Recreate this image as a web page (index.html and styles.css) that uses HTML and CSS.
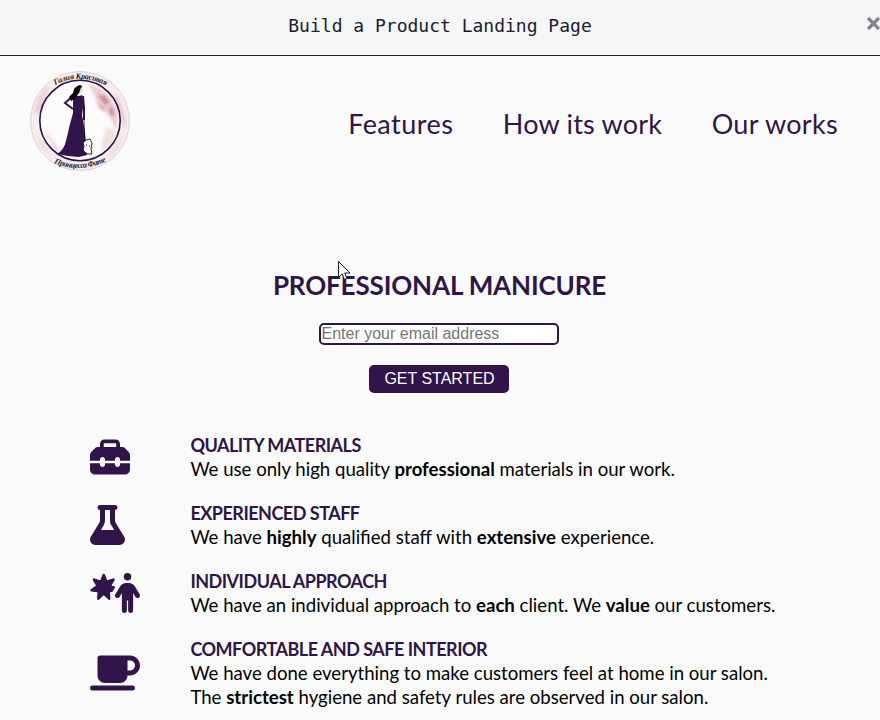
FILE: index.html
```html
<!DOCTYPE html>
<html lang="en">
<head>
<meta charset="utf-8">
<title>Build a Product Landing Page</title>
<link rel="stylesheet" href="styles.css">
</head>
<body>
<div class="topbar"><span class="topbar-title">Build a Product Landing Page</span>
<svg class="close" viewBox="0 0 15 15"><path d="M2 2L13 13M13 2L2 13"/></svg></div>
<header class="header">
<svg class="logo" viewBox="0 0 100 100">
<defs>
<filter id="soft"><feGaussianBlur stdDeviation="1.5"/></filter>
<path id="topArc" d="M25 14Q50 1 77 15"/>
<path id="bottomArc" d="M24 92Q50 103 77 90"/>
</defs>
<circle cx="50" cy="50" r="49.500" fill="#f6ecef" stroke="#ddd3d6"/>
<g filter="url(#soft)">
<path d="M4 42Q8 22 19 14L14 31 8 43ZM84 19Q97 38 96 60L90 49Z" fill="#ebcfd7"/>
<path d="M5 62Q9 78 20 86L15 72Z" fill="#eee1d8"/>
<path d="M94 62Q90 80 77 90L84 75Z" fill="#f0dfd9"/>
</g>
<circle cx="50" cy="49.500" r="40" fill="#fefbfb"/>
<g filter="url(#soft)">
<path d="M58 13Q80 17 88 42L87 60 81 48 76 42 67 35 66 27Z" fill="#ebcdd2"/>
<path d="M67 23L75 25 80 32 75 34ZM79 35L84 39 84 46 80 43ZM69 33L74 37 72 40Z" fill="#c98c98"/>
<path d="M77 56L87 61 81 75 71 80 73 68Z" fill="#f0e0db"/>
<path d="M12 56L23 69 33 81 24 79Z" fill="#eedce0"/>
</g>
<circle cx="50" cy="49.500" r="40.200" fill="none" stroke="#2d1646" stroke-width="1.600"/>
<path d="M43 24Q48 26 52 24L54 29 52 44 55 61 57 84 49 86 38 85 27 83Q34 79 36 70L40 53 43 42Z" fill="#30144a"/>
<path d="M43 25L35 32 43 38M53 25L54 37 54 49" fill="none" stroke="#30144a" stroke-width="2"/>
<path d="M46 16Q51 12 52 16L51 20 48 23 46 27 41 30 39 26 43 22 44 18Z" fill="#09070b"/>
<path d="M51 16L53 19 51 22 49 23Z" fill="#e5d6db"/>
<path d="M54 49L55 80" fill="none" stroke="#171217" stroke-width=".8"/>
<path d="M56 69L60 68 62 72 61 78 62 83H58L56 82 53 79 54 75 53 72Z" fill="#fff" stroke="#171217" stroke-width=".9"/>
<path d="M56 74h1M59 75h1" stroke="#151015"/><path d="M61 76l2 1" stroke="#d34b58"/>
<text class="logo-text"><textPath href="#topArc" textLength="53">Галия Красивая</textPath></text>
<text class="logo-text"><textPath href="#bottomArc" textLength="54">Принцесса Фате</textPath></text>
</svg>
<nav class="nav"><a class="n1">Features</a><a class="n2">How its work</a><a class="n3">Our works</a></nav>
</header>
<main>
<section class="hero">
<h1>PROFESSIONAL MANICURE</h1>
<input class="email" type="email" placeholder="Enter your email address">
<button class="start">GET STARTED</button>
</section>
<section class="features">
<article class="row"><svg class="icon w512" viewBox="0 0 512 512"><path d="M176 88v40H336V88c0-4.400-3.600-8-8-8H184c-4.400 0-8 3.600-8 8zm-48 40V88c0-30.900 25.100-56 56-56H328c30.900 0 56 25.100 56 56v40h28.100c12.700 0 24.900 5.100 33.900 14.100l51.900 51.900c9 9 14.100 21.200 14.100 33.900V304H384V288c0-17.700-14.300-32-32-32s-32 14.300-32 32v16H192V288c0-17.700-14.300-32-32-32s-32 14.300-32 32v16H0V227.900c0-12.700 5.100-24.900 14.100-33.900l51.900-51.900c9-9 21.200-14.100 33.900-14.100H128zM0 416V336H128v16c0 17.700 14.300 32 32 32s32-14.300 32-32V336H320v16c0 17.700 14.300 32 32 32s32-14.300 32-32V336H512v80c0 35.300-28.700 64-64 64H64c-35.300 0-64-28.700-64-64z"/></svg>
<div class="copy"><h2>QUALITY MATERIALS</h2><p>We use only high quality <b>professional</b> materials in our work.</p></div></article>
<article class="row"><svg class="icon w448" viewBox="0 0 448 512"><path d="M288 0H128C110.300 0 96 14.300 96 32s14.300 32 32 32V196.800c0 11.800-3.300 23.500-9.500 33.500L10.300 406.200C3.600 417.200 0 429.700 0 442.600C0 480.900 31.100 512 69.400 512H378.600c38.300 0 69.400-31.100 69.400-69.400c0-12.800-3.600-25.400-10.300-36.400L329.500 230.400c-6.200-10.100-9.500-21.700-9.500-33.500V64c17.700 0 32-14.300 32-32s-14.300-32-32-32H288zM192 196.800V64h64V196.800c0 23.700 6.600 46.900 19 67.100L309.500 320h-171L173 263.900c12.400-20.200 19-43.400 19-67.100z"/></svg>
<div class="copy"><h2>EXPERIENCED STAFF</h2><p>We have <b>highly</b> qualified staff with <b>extensive</b> experience.</p></div></article>
<article class="row"><svg class="icon w640" viewBox="0 0 640 512"><path d="M480 96a48 48 0 1 0 0-96 48 48 0 1 0 0 96zm-8 384V352h16V480c0 17.700 14.300 32 32 32s32-14.300 32-32V256.900l28.600 47.500c9.100 15.100 28.800 20 43.900 10.900s20-28.800 10.900-43.900l-58.300-97c-17.400-28.900-48.600-46.600-82.300-46.600H465.100c-33.700 0-64.900 17.700-82.300 46.600l-58.300 97c-9.100 15.100-4.200 34.800 10.900 43.900s34.800 4.200 43.900-10.900L408 256.900V480c0 17.700 14.300 32 32 32s32-14.300 32-32zM190.900 18.100C188.400 12 182.600 8 176 8s-12.400 4-14.900 10.100l-29.400 74L55.600 68.900c-6.300-1.900-13.100 .2-17.200 5.300s-4.600 12.200-1.400 17.900l39.500 69.100L10.900 206.400c-5.400 3.700-8 10.300-6.500 16.700s6.700 11.200 13.100 12.200l78.700 12.200L90.600 327c-.5 6.500 3.100 12.700 9 15.500s12.900 1.800 17.800-2.600L176 286.100l58.600 53.900c4.800 4.400 11.900 5.500 17.800 2.600s9.500-9 9-15.500l-5.600-79.400 29.500-4.500 40-66-50-16L315 92.200c3.300-5.700 2.700-12.800-1.400-17.900s-10.900-7.200-17.200-5.300L220.300 92.100z"/></svg>
<div class="copy"><h2>INDIVIDUAL APPROACH</h2><p>We have an individual approach to <b>each</b> client. We <b>value</b> our customers.</p></div></article>
<article class="row"><svg class="icon w640" viewBox="0 0 640 512"><path d="M96 64c0-17.700 14.300-32 32-32H512c70.700 0 128 57.300 128 128s-57.300 128-128 128H480c0 53-43 96-96 96H192c-53 0-96-43-96-96V64zM480 224h32c35.300 0 64-28.700 64-64s-28.700-64-64-64H480V224zM32 416H544c17.700 0 32 14.300 32 32s-14.300 32-32 32H32c-17.700 0-32-14.300-32-32s14.300-32 32-32z"/></svg>
<div class="copy"><h2>COMFORTABLE AND SAFE INTERIOR</h2><p>We have done everything to make customers feel at home in our salon.<br>The <b>strictest</b> hygiene and safety rules are observed in our salon.</p></div></article>
</section>
</main>
<svg class="cursor" viewBox="0 0 13 20"><path d="M.5.5V16.500L4.200 13 6.500 18.500 9 17.500 6.700 12H12Z"/></svg>
</body>
</html>
```
FILE: styles.css
```css
* { box-sizing: border-box; }
body { margin: 0; height: 720px; overflow: hidden; background: #fafafa; color: #000; font-family: Lato, "Noto Sans", sans-serif; position: relative; }
.topbar { height: 56px; background: #f5f6f7; border-bottom: 1px solid #1b1b32; position: relative; text-align: center; }
.topbar-title { font: 18px/52px "DejaVu Sans Mono", monospace; color: #1b1b32; }
.close { position: absolute; left: 866px; top: 16px; width: 15px; height: 15px; fill: none; stroke: #858591; stroke-width: 3.2; }
.header { height: 130px; padding: 15px 42px 15px 30px; display: flex; justify-content: space-between; }
.logo { width: 100px; height: 100px; flex: none; }
.logo-text { font: italic bold 8px "Liberation Serif", serif; fill: #251a29; }
.nav { display: flex; gap: 49.5px; height: 104px; align-items: center; font-size: 27px; color: #30144a; letter-spacing: .3px; white-space: nowrap; }
.n1 { letter-spacing: .45px; }
.n2 { letter-spacing: .2px; }
.hero { height: 247px; padding-top: 81px; display: flex; flex-direction: column; align-items: center; color: #30144a; }
h1 { margin: 0 1px 20px 0; font-size: 26px; line-height: 36px; font-weight: 700; letter-spacing: -.14px; white-space: nowrap; }
.email { width: 240px; height: 22px; margin: 0 2px 20px 0; padding: 0 .5px; border: 2px solid #30144a; border-radius: 5px; background: #fff; font: 16px/18px "Liberation Sans", sans-serif; }
.email::placeholder { color: #757575; opacity: 1; }
.start { width: 140px; height: 28px; margin-right: 2px; padding: 0 0 1px 1px; border: 0; border-radius: 5px; background: #30144a; color: #fff; font: 16px "Liberation Sans", sans-serif; }
.features { padding-left: 90.4px; display: flex; flex-direction: column; gap: 20px; }
.row { display: grid; grid-template-columns: 100px 1fr; align-items: center; }
.icon { height: 40px; fill: #30144a; }
.w512 { width: 40px; } .w448 { width: 35px; } .w640 { width: 50px; }
.copy { font-size: 18.6px; line-height: 24px; white-space: nowrap; }
h2 { margin: 0; padding-top: 1px; font-size: 18px; line-height: 23px; letter-spacing: -.5px; color: #30144a; }
p { margin: 0; }
.cursor { position: absolute; left: 338px; top: 261px; width: 13px; height: 20px; fill: #fff; stroke: #1b1b32; }
```
